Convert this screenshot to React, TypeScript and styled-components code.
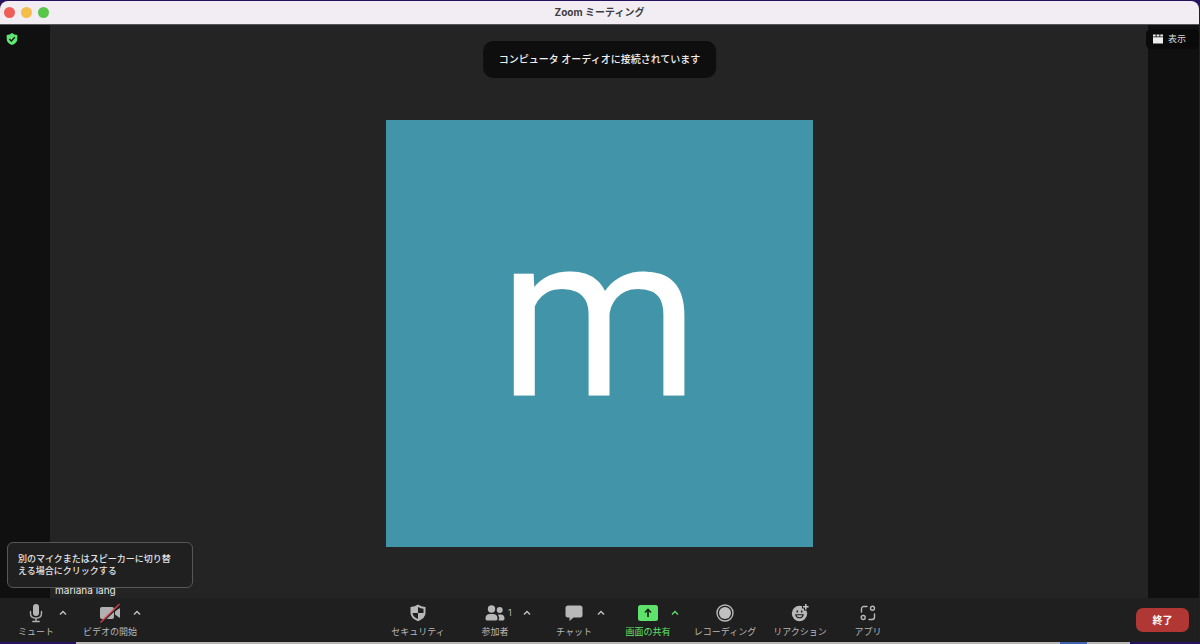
import React from "react";
import styled, { createGlobalStyle } from "styled-components";

const GlobalStyle = createGlobalStyle`
  *, *::before, *::after { box-sizing: border-box; }
  body { margin: 0; background: #26125e; }
  body, button { font-family: Inter, "Noto Sans CJK JP", sans-serif; }
  button { border: 0; padding: 0; margin: 0; background: none; color: inherit; cursor: pointer; }
  svg { display: block; }
`;

const Desktop = styled.div`
  display: flex;
  flex-direction: column;
  min-height: 100vh;
  padding: 1px 1px 0 0;
  background: #26125e;
`;

const Window = styled.div`
  flex: 1;
  display: flex;
  flex-direction: column;
  border-radius: 8px 8px 0 0;
  overflow: hidden;
  background: #242424;
`;

const TitleBar = styled.header`
  display: grid;
  grid-template-columns: 1fr auto 1fr;
  align-items: center;
  height: 24px;
  padding: 0 4px;
  background: #f1edf3;
  border-bottom: 1px solid #58555b;
`;

const Title = styled.h1`
  margin: 0;
  padding-bottom: 2px;
  font-size: 10px;
  line-height: 16px;
  font-weight: 700;
  color: #403d42;
`;

const Lights = styled.div`
  display: flex;
  gap: 6px;
`;

const Light = styled.button<{ $color: string }>`
  width: 11px;
  height: 11px;
  border-radius: 50%;
  background: ${(p) => p.$color};
`;

const Stage = styled.main`
  position: relative;
  flex: 1;
  display: grid;
  grid-template-columns: 50px 1fr 51px;
`;

const Rail = styled.aside`
  background: #101010;
`;

const ShieldButton = styled.button`
  display: block;
  margin: 7px 0 0 6px;
`;

const VideoArea = styled.section`
  display: flex;
  justify-content: center;
  align-items: flex-start;
  padding: 95px 0 51px;
`;

const Avatar = styled.div`
  display: flex;
  justify-content: center;
  align-items: center;
  width: 427px;
  height: 427px;
  padding-bottom: 32px;
  background: #4295a8;
  color: #fff;
  font-family: Roboto, sans-serif;
  font-size: 230px;
  line-height: 280px;
`;

const Toast = styled.div`
  position: absolute;
  top: 16px;
  left: 50%;
  transform: translateX(-50%);
  padding: 10px 16px;
  border-radius: 10px;
  background: #0e0e0e;
  color: #f0f0f0;
  font-size: 10px;
  line-height: 17px;
  font-weight: 500;
  white-space: nowrap;
`;

const ViewButton = styled.button`
  position: absolute;
  top: 4px;
  right: 0;
  display: flex;
  align-items: center;
  gap: 5px;
  height: 20px;
  padding: 0 13px 0 7px;
  border-radius: 5px;
  background: #0a0a0a;
  color: #d8d8d8;
  font-size: 9px;
  line-height: 12px;
`;

const NameTag = styled.div`
  position: absolute;
  left: 50px;
  bottom: 1px;
  padding: 0 5px;
  color: #e8e8e8;
  font-size: 10px;
  line-height: 14px;
`;

const Hint = styled.div`
  position: absolute;
  left: 7px;
  bottom: 10px;
  width: 186px;
  padding: 10px 20px 10px 10px;
  border: 1px solid #575757;
  border-radius: 6px;
  background: #202020;
  color: #e6e6e6;
  font-size: 9px;
  line-height: 12px;
  font-weight: 500;
`;

const Toolbar = styled.nav`
  display: flex;
  align-items: flex-start;
  height: 44px;
  padding: 0 10px 0 14px;
  background: #1f1f1f;
`;

const ToolGroup = styled.div<{ $grow?: boolean }>`
  flex: ${(p) => (p.$grow ? 1 : "none")};
  display: flex;
  justify-content: center;
  gap: 20px;
  margin-right: ${(p) => (p.$grow ? "4px" : "0")};
`;

const Tool = styled.div`
  display: flex;
`;

const ToolButton = styled.button<{ $width: number; $accent?: boolean }>`
  display: flex;
  flex-direction: column;
  align-items: center;
  gap: 3px;
  width: ${(p) => p.$width}px;
  padding-top: 5px;
  color: ${(p) => (p.$accent ? "#5fe26b" : "#b8b8b8")};
  font-size: 9px;
  line-height: 12px;
  white-space: nowrap;
`;

const IconBox = styled.span`
  position: relative;
  display: flex;
  align-items: center;
  height: 20px;
`;

const Count = styled.span`
  position: absolute;
  left: 100%;
  padding-left: 3px;
`;

const CaretButton = styled.button<{ $accent?: boolean }>`
  display: flex;
  align-items: center;
  justify-content: center;
  width: 10px;
  height: 30px;
  color: ${(p) => (p.$accent ? "#5fe26b" : "#c4c4c4")};
`;

const EndButton = styled.button`
  width: 53px;
  height: 24px;
  margin-top: 10px;
  border-radius: 7px;
  background: #b03733;
  color: #fff;
  font-size: 10px;
  line-height: 16px;
  font-weight: 700;
`;

const Shelf = styled.div`
  display: flex;
  height: 2px;
  padding: 0 69px 0 76px;
`;

const ShelfPart = styled.div<{ $width?: number; $color: string }>`
  flex: ${(p) => (p.$width ? `0 0 ${p.$width}px` : "1")};
  background: ${(p) => p.$color};
`;

const MicIcon = () => (
  <svg width="14" height="20" viewBox="0 0 14 20" aria-hidden="true">
    <rect x="4" y="1" width="6" height="12" rx="3" fill="#b4b4b4" />
    <path d="M1.5 8.5v1.8c0 3 2.2 5 5.5 5s5.500-2 5.500-5V8.500M7 15.300v3M3.800 18.500h6.400" fill="none" stroke="#b0b0b0" strokeWidth="1.400" strokeLinecap="round" />
  </svg>
);

const VideoOffIcon = () => (
  <svg width="22" height="20" viewBox="0 0 22 20" aria-hidden="true">
    <rect x="1" y="4" width="14" height="12" rx="2" fill="#b0b0b0" />
    <path d="M16 8.500l4-3q1-.5 1 .6v8q0 1-1 .5l-4-3z" fill="#b0b0b0" />
    <path d="M2.200 20L21 2.200" stroke="#1f1f1f" strokeWidth="1.600" />
    <path d="M1.500 19.500L20.500 1" stroke="#d9434f" strokeWidth="1.300" />
  </svg>
);

const SecurityIcon = () => (
  <svg width="16" height="18" viewBox="0 0 16 18" aria-hidden="true">
    <path d="M8 .5Q5 2.800.5 3V9q0 5.200 7.500 8.300Q15.500 14.200 15.500 9V3Q11 2.800 8 .5z" fill="#b8b8b8" />
    <path d="M8 3Q10.500 4.500 13.500 4.800V9H8zM8 9v6Q2.700 12.800 2.500 9z" fill="#1f1f1f" />
  </svg>
);

const PeopleIcon = () => (
  <svg width="20" height="18" viewBox="0 0 20 18" aria-hidden="true" fill="#b8b8b8">
    <circle cx="6.500" cy="5" r="3.700" />
    <circle cx="14.700" cy="6" r="3" />
    <path d="M.5 14.500Q.5 10 5 10h3q4.500 0 4.500 4.500 0 2-1.500 2H2q-1.500 0-1.500-2zM13 10.500h2.500q4 0 4 4 0 2-1.500 2h-4.500q1.500-3-.5-6z" />
  </svg>
);

const ChatIcon = () => (
  <svg width="18" height="18" viewBox="0 0 18 18" aria-hidden="true">
    <path d="M3 1.500h12q2.500 0 2.500 2.500v7q0 2.500-2.500 2.500H8.500L4.500 17v-3.500H3Q.5 13.500.5 11V4Q.5 1.500 3 1.500z" fill="#b8b8b8" />
  </svg>
);

const ShareIcon = () => (
  <svg width="20" height="16" viewBox="0 0 20 16" aria-hidden="true">
    <rect width="20" height="16" rx="2.500" fill="#5fe26b" />
    <path d="M10 12V5M7 7.500l3-3 3 3" fill="none" stroke="#1a241b" strokeWidth="1.700" />
  </svg>
);

const RecordIcon = () => (
  <svg width="18" height="18" viewBox="0 0 18 18" aria-hidden="true">
    <circle cx="9" cy="9" r="8" fill="none" stroke="#b8b8b8" strokeWidth="1.400" />
    <circle cx="9" cy="9" r="6" fill="#c0c0c0" />
  </svg>
);

const ReactionIcon = () => (
  <svg width="18" height="20" viewBox="0 0 18 20" aria-hidden="true">
    <circle cx="8.500" cy="10.500" r="7.700" fill="#b8b8b8" />
    <path d="M14.800 0v7.500M11 3.800h7" stroke="#1f1f1f" strokeWidth="3.600" />
    <path d="M6.300 7.600v1.800M10.700 7.600v1.800" stroke="#1f1f1f" strokeWidth="1.500" />
    <path d="M4.800 11.800h7.400q-.8 3-3.700 3t-3.700-3z" fill="none" stroke="#1f1f1f" strokeWidth="1.100" />
    <path d="M14.800 1v5.600M12 3.800h5.600" stroke="#c4c4c4" strokeWidth="1.500" />
  </svg>
);

const AppsIcon = () => (
  <svg width="16" height="16" viewBox="0 0 16 16" aria-hidden="true" fill="none" stroke="#b8b8b8" strokeWidth="1.400" strokeLinecap="round">
    <path d="M1.500 7V4q0-2.500 2.500-2.500h3M14.500 9v3q0 2.500-2.500 2.500H9" />
    <circle cx="12.500" cy="3.200" r="2" />
    <circle cx="3.200" cy="12.500" r="2" />
  </svg>
);

const CaretIcon = () => (
  <svg width="8" height="6" viewBox="0 0 8 6" aria-hidden="true">
    <path d="M1 4.500l3-3 3 3" fill="none" stroke="currentColor" strokeWidth="1.400" />
  </svg>
);

const ShieldIcon = () => (
  <svg width="12" height="14" viewBox="0 0 12 14" aria-hidden="true">
    <path d="M6 1Q3.800 2.800.7 3v4q0 4 5.300 6 5.300-2 5.300-6V3Q8.200 2.800 6 1z" fill="#5ee873" />
    <path d="M3.300 7l2 2 3.500-3.700" fill="none" stroke="#101010" strokeWidth="1.300" />
  </svg>
);

const ViewIcon = () => (
  <svg width="10" height="10" viewBox="0 0 10 10" aria-hidden="true">
    <path d="M0 .5h2.700v2H0zM3.600 .5h2.800v2H3.600zM7.300 .5H10v2H7.300zM0 3.200h10v6.300H0z" fill="#ededed" />
  </svg>
);

interface ToolItem {
  label: string;
  icon: React.ReactNode;
  width: number;
  count?: number;
  caret?: string;
  accent?: boolean;
}

const audioVideo: ToolItem[] = [
  { label: "ミュート", icon: <MicIcon />, width: 44, caret: "オーディオ設定" },
  { label: "ビデオの開始", icon: <VideoOffIcon />, width: 44, caret: "ビデオ設定" },
];

const meetingTools: ToolItem[] = [
  { label: "セキュリティ", icon: <SecurityIcon />, width: 60 },
  { label: "参加者", icon: <PeopleIcon />, width: 54, count: 1, caret: "参加者オプション" },
  { label: "チャット", icon: <ChatIcon />, width: 44, caret: "チャットオプション" },
  { label: "画面の共有", icon: <ShareIcon />, width: 44, caret: "共有オプション", accent: true },
  { label: "レコーディング", icon: <RecordIcon />, width: 50 },
  { label: "リアクション", icon: <ReactionIcon />, width: 60 },
  { label: "アプリ", icon: <AppsIcon />, width: 36 },
];

const renderTool = (item: ToolItem) => (
  <Tool key={item.label}>
    <ToolButton $width={item.width} $accent={item.accent}>
      <IconBox>
        {item.icon}
        {item.count !== undefined && <Count>{item.count}</Count>}
      </IconBox>
      <span>{item.label}</span>
    </ToolButton>
    {item.caret && (
      <CaretButton $accent={item.accent} aria-label={item.caret}>
        <CaretIcon />
      </CaretButton>
    )}
  </Tool>
);

export default function App() {
  return (
    <Desktop lang="ja">
      <GlobalStyle />
      <Window>
        <TitleBar>
          <Lights>
            <Light $color="#ee5f58" aria-label="閉じる" />
            <Light $color="#f5bd4a" aria-label="しまう" />
            <Light $color="#58c649" aria-label="拡大" />
          </Lights>
          <Title>Zoom ミーティング</Title>
        </TitleBar>
        <Stage>
          <Rail>
            <ShieldButton aria-label="ミーティング情報">
              <ShieldIcon />
            </ShieldButton>
          </Rail>
          <VideoArea>
            <Avatar>m</Avatar>
          </VideoArea>
          <Rail />
          <Toast role="status">コンピュータ オーディオに接続されています</Toast>
          <ViewButton>
            <ViewIcon />
            表示
          </ViewButton>
          <NameTag>mariana lang</NameTag>
          <Hint role="tooltip">別のマイクまたはスピーカーに切り替える場合にクリックする</Hint>
        </Stage>
        <Toolbar>
          <ToolGroup>{audioVideo.map(renderTool)}</ToolGroup>
          <ToolGroup $grow>{meetingTools.map(renderTool)}</ToolGroup>
          <EndButton>終了</EndButton>
        </Toolbar>
      </Window>
      <Shelf>
        <ShelfPart $color="#b9b5b3" />
        <ShelfPart $color="#3f63ad" $width={27} />
        <ShelfPart $color="#b9b5b3" $width={43} />
      </Shelf>
    </Desktop>
  );
}
